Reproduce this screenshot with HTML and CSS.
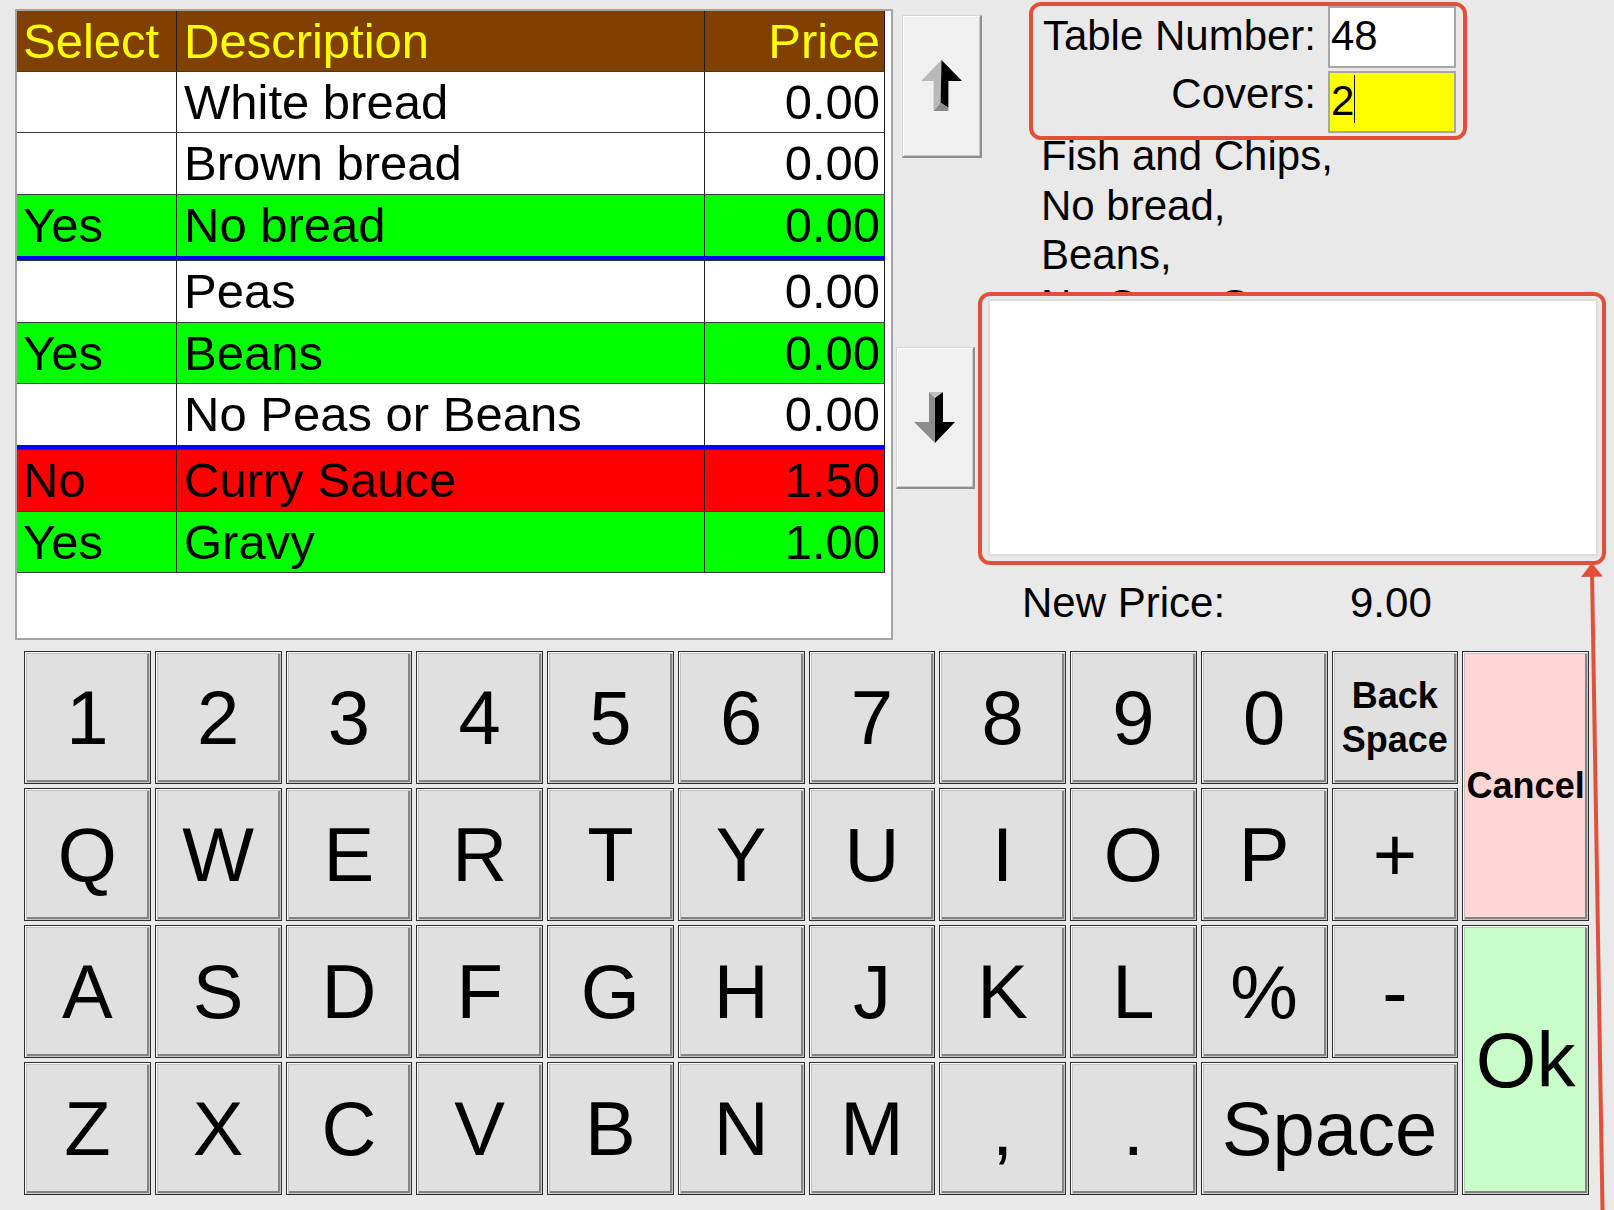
FILE: index.html
```
<!DOCTYPE html>
<html>
<head>
<meta charset="utf-8">
<title>Modifiers</title>
<link rel="stylesheet" href="styles.css">
</head>
<body>
<div class="app">
  <div class="top">
    <div class="list-panel">
      <div class="grid-row head"><div class="cell sel">Select</div><div class="cell desc">Description</div><div class="cell price">Price</div></div>
      <div class="grid-row"><div class="cell sel"></div><div class="cell desc">White bread</div><div class="cell price">0.00</div></div>
      <div class="grid-row"><div class="cell sel"></div><div class="cell desc">Brown bread</div><div class="cell price">0.00</div></div>
      <div class="grid-row yes group-end"><div class="cell sel">Yes</div><div class="cell desc">No bread</div><div class="cell price">0.00</div></div>
      <div class="grid-row group-start"><div class="cell sel"></div><div class="cell desc">Peas</div><div class="cell price">0.00</div></div>
      <div class="grid-row yes"><div class="cell sel">Yes</div><div class="cell desc">Beans</div><div class="cell price">0.00</div></div>
      <div class="grid-row group-end"><div class="cell sel"></div><div class="cell desc">No Peas or Beans</div><div class="cell price">0.00</div></div>
      <div class="grid-row no group-start"><div class="cell sel">No</div><div class="cell desc">Curry Sauce</div><div class="cell price">1.50</div></div>
      <div class="grid-row yes"><div class="cell sel">Yes</div><div class="cell desc">Gravy</div><div class="cell price">1.00</div></div>
    </div>
    <div class="scroll-col">
      <div class="scroll-btn up">
        <svg width="42" height="52" viewBox="0 0 42 52">
          <polygon points="20.5,0 0,21 12.6,21 12.6,51 19.6,42.7" fill="#b9b9b9"/>
          <polygon points="20.5,0 41,21 27.4,21 27.4,47.7 19.6,42.7" fill="#000"/>
          <polygon points="12.6,51 19.6,42.7 27.4,47.7 27.4,51" fill="#8a8a8a"/>
        </svg>
      </div>
      <div class="scroll-btn down">
        <svg width="42" height="52" viewBox="0 0 42 52">
          <polygon points="15,0 29,0 21,6" fill="#c2c2c2"/>
          <polygon points="15,0 21,6 21,51 0,30 15,30" fill="#8c8c8c"/>
          <polygon points="29,0 21,6 21,51 41,30 29,30" fill="#000"/>
        </svg>
      </div>
    </div>
    <div class="detail-col">
      <div class="table-form">
        <span class="form-label first">Table Number:</span>
        <div class="field">48</div>
        <span class="form-label">Covers:</span>
        <div class="field active">2<span class="caret"></span></div>
      </div>
      <div class="summary">Fish and Chips,<br>No bread,<br>Beans,<br>No Curry Sauce,</div>
      <div class="notes"></div>
      <div class="new-price"><span class="np-label">New Price:</span><span class="np-value">9.00</span></div>
    </div>
  </div>

  <div class="keyboard">
    <div class="key">1</div><div class="key">2</div><div class="key">3</div><div class="key">4</div><div class="key">5</div>
    <div class="key">6</div><div class="key">7</div><div class="key">8</div><div class="key">9</div><div class="key">0</div>
    <div class="key small">Back<br>Space</div>
    <div class="key small cancel">Cancel</div>

    <div class="key">Q</div><div class="key">W</div><div class="key">E</div><div class="key">R</div><div class="key">T</div>
    <div class="key">Y</div><div class="key">U</div><div class="key">I</div><div class="key">O</div><div class="key">P</div>
    <div class="key">+</div>

    <div class="key">A</div><div class="key">S</div><div class="key">D</div><div class="key">F</div><div class="key">G</div>
    <div class="key">H</div><div class="key">J</div><div class="key">K</div><div class="key">L</div><div class="key">%</div>
    <div class="key">-</div>
    <div class="key ok">Ok</div>

    <div class="key">Z</div><div class="key">X</div><div class="key">C</div><div class="key">V</div><div class="key">B</div>
    <div class="key">N</div><div class="key">M</div><div class="key">,</div><div class="key">.</div>
    <div class="key space">Space</div>
  </div>

  <div class="annot-box box-form"></div>
  <div class="annot-box box-notes"></div>
  <svg class="annot-arrow" width="44" height="655" viewBox="0 0 44 655">
    <line x1="22" y1="16" x2="32.5" y2="655" stroke="#e2503c" stroke-width="4"/>
    <polygon points="21.8,8 11,22 33,21.6" fill="#e2503c"/>
  </svg>
</div>
</body>
</html>
```
FILE: styles.css
```
* { box-sizing: border-box; }

body {
  margin: 0;
  background: #e9e9e9;
  font-family: "Liberation Sans", Arial, sans-serif;
  color: #000;
}

.app {
  position: relative;
  width: 1614px;
  height: 1210px;
  overflow: hidden;
}

.top {
  display: flex;
  height: 651px;
}

/* ---------- modifier list ---------- */
.list-panel {
  flex-shrink: 0;
  margin: 9px 0 0 15px;
  width: 878px;
  height: 631px;
  border: 2px solid #a3a3a3;
  background: #fff;
}

.grid-row {
  display: grid;
  grid-template-columns: 160px 528px 180px;
  width: 868px;
  height: 61.4px;
  border-bottom: 1px solid #3c3c3c;
  font-size: 49px;
  line-height: 60.4px;
}

.grid-row.head {
  height: 61px;
  line-height: 60px;
  background: #804000;
  color: #ffff00;
}

.grid-row.group-end {
  height: 65.4px;
  border-bottom: 4px solid #0000ff;
}

.grid-row.group-start {
  height: 62.4px;
  border-top: 1px solid #333;
}

.grid-row.yes { background: #00ff00; }
.grid-row.no { background: #ff0000; }

.cell {
  border-right: 1px solid #1e1e1e;
  padding-left: 6px;
  white-space: nowrap;
  overflow: hidden;
}

.cell.desc { padding-left: 7px; }

.cell.price {
  text-align: right;
  padding: 0 4px 0 0;
}

/* ---------- scroll buttons ---------- */
.scroll-col {
  flex-shrink: 0;
  width: 95px;
  display: flex;
  flex-direction: column;
}

.scroll-btn {
  display: flex;
  align-items: center;
  justify-content: center;
  background: #f0f0f0;
  border-top: 1px solid #d6d6d6;
  border-left: 1px solid #d6d6d6;
  border-right: 2px solid #8f8f8f;
  border-bottom: 2px solid #8f8f8f;
  box-shadow: inset 1px 1px 0 #fff, inset -1px -1px 0 #c8c8c8;
}

.scroll-btn.up {
  margin: 15px 0 0 9px;
  width: 80px;
  height: 143px;
}

.scroll-btn.down {
  margin: 189px 0 0 3px;
  width: 79px;
  height: 142px;
}

/* ---------- detail column ---------- */
.detail-col {
  flex: 1;
  display: flex;
  flex-direction: column;
  font-size: 42px;
}

.table-form {
  display: grid;
  grid-template-columns: 277px 128px;
  column-gap: 12px;
  row-gap: 3px;
  justify-content: start;
  align-items: start;
  margin: 6px 0 0 51px;
}

.form-label {
  text-align: right;
  line-height: 46px;
  white-space: nowrap;
}

.form-label.first { margin-top: 7px; }

.field {
  height: 62px;
  border: 2px solid #a6a6a6;
  background: #fff;
  line-height: 55px;
  padding-left: 1px;
}

.field.active { background: #ffff00; }

.caret {
  display: inline-block;
  width: 1px;
  height: 48px;
  background: #10102a;
  vertical-align: -8px;
}

.summary {
  margin: -2px 0 0 53px;
  line-height: 49.5px;
  height: 165px;
  overflow: hidden;
}

.notes {
  width: 610px;
  height: 257px;
  margin-top: 3px;
  border: 2px solid #dcdcdc;
  background: #fff;
}

.new-price {
  display: flex;
  margin: 23px 0 0 34px;
}

.np-label { width: 328px; }

/* ---------- keyboard ---------- */
.keyboard {
  display: grid;
  grid-template-columns: repeat(12, 1fr);
  grid-template-rows: repeat(4, 133px);
  gap: 4px;
  margin-left: 24px;
  width: 1565px;
}

.key {
  display: flex;
  align-items: center;
  justify-content: center;
  text-align: center;
  background: #e0e0e0;
  border: 1px solid #2e2e2e;
  box-shadow: inset 1px 1px 0 #fafafa, inset 2px 2px 0 #c2c2c2, inset -1px -1px 0 #c6c6c6, inset -3px -3px 0 #848484;
  font-size: 76px;
  line-height: 1;
  white-space: nowrap;
  overflow: hidden;
}

.key.small {
  font-size: 36px;
  font-weight: bold;
  line-height: 44px;
}

.key.cancel {
  grid-column: 12;
  grid-row: 1 / span 2;
  background: #ffd6d6;
  overflow: visible;
}

.key.ok {
  grid-column: 12;
  grid-row: 3 / span 2;
  background: #c8ffc8;
  font-size: 78px;
}

.key.space { grid-column: 10 / span 2; }

/* ---------- annotations (overlay) ---------- */
.annot-box {
  position: absolute;
  border: 4px solid #e2503c;
  border-radius: 12px;
}

.box-form {
  left: 1029px;
  top: 2px;
  width: 438px;
  height: 138px;
}

.box-notes {
  left: 978px;
  top: 292px;
  width: 628px;
  height: 273px;
}

.annot-arrow {
  position: absolute;
  left: 1570px;
  top: 555px;
}
```
